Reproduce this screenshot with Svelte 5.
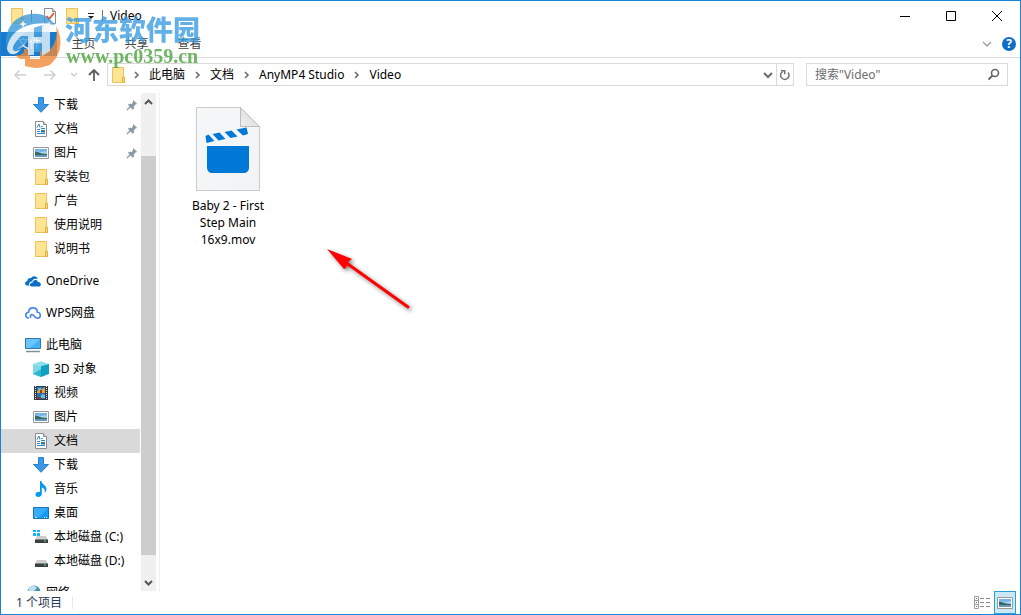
<script lang="ts">
  type Item = { icon: string; label: string; pinned?: boolean; root?: boolean; selected?: boolean };

  const groups: Item[][] = [
    [
      { icon: 'download', label: '下载', pinned: true },
      { icon: 'document', label: '文档', pinned: true },
      { icon: 'picture', label: '图片', pinned: true },
      { icon: 'folder', label: '安装包' },
      { icon: 'folder', label: '广告' },
      { icon: 'folder', label: '使用说明' },
      { icon: 'folder', label: '说明书' },
    ],
    [{ icon: 'onedrive', label: 'OneDrive', root: true }],
    [{ icon: 'wps', label: 'WPS网盘', root: true }],
    [
      { icon: 'computer', label: '此电脑', root: true },
      { icon: 'cube', label: '3D 对象' },
      { icon: 'film', label: '视频' },
      { icon: 'picture', label: '图片' },
      { icon: 'document', label: '文档', selected: true },
      { icon: 'download', label: '下载' },
      { icon: 'music', label: '音乐' },
      { icon: 'desktop', label: '桌面' },
      { icon: 'drivec', label: '本地磁盘 (C:)' },
      { icon: 'drive', label: '本地磁盘 (D:)' },
    ],
    [{ icon: 'network', label: '网络', root: true }],
  ];

  const tabs = ['主页', '共享', '查看'];
  const crumbs = ['此电脑', '文档', 'AnyMP4 Studio', 'Video'];
  let search = $state('');
</script>

{#snippet icon(name: string)}
  <svg class="icon" width="16" height="16" viewBox="0 0 16 16" aria-hidden="true">
    {#if name === 'download'}
      <path d="M5.5 .5h5v7h5L8 15.3.5 7.500h5z" fill="#3b96e6" stroke="#2a7fcb" />
    {:else if name === 'document'}
      <path d="M2.500.500h8l3 3v12h-11z" fill="#fff" stroke="#8c8c8c" />
      <path d="M10.500.500v3h3" fill="#ddd" stroke="#8c8c8c" />
      <path d="M4 6.500 6 3l1 3.500M8 5.500h1.500M8 7.500h4M4 8.500h3M4 10.500h3M4 12.500h8" fill="none" stroke="#2b8ac6" />
      <path d="M8 9h4v2.500H8z" fill="#3b78a8" />
    {:else if name === 'picture'}
      <path d="M.5 2.500h15v11H.5z" fill="#fff" stroke="#9a9a9a" />
      <path d="M2 4h12v8H2z" fill="#a8d2f0" />
      <path d="M2 4h12v2L8 7 2 5.500z" fill="#72b3ea" />
      <path d="M2 6.500c3 0 4 2 12 2.500v1.500H2z" fill="#326a62" />
      <path d="M2 10h12v2H2z" fill="#6a98bd" />
    {:else if name === 'folder'}
      <path d="M2.500.500h11v9l1 1v5h-12z" fill="#fee493" stroke="#eac35c" />
      <path d="M12.500 15.500V10l1-.8 1 .8v5.500z" fill="#fbd96e" stroke="#dfb340" />
    {:else if name === 'onedrive'}
      <path d="M1.500 12.500C-.6 11.500-.2 8.300 2.300 8 2.500 5.600 4.400 4.800 6 5.200 7.500 2.500 12 2.500 12.700 6.200 9.500 5.200 7.500 6.500 7 8.600 4.500 8.500 3.500 11 4.500 12.500z" fill="#0f6fc6" />
      <path d="M6.500 13.500c-2.400-.4-2.200-3.800.9-3.800C8 6.500 12 6 13 9c3-.2 4 3.700 1.200 4.500z" fill="#0f6fc6" />
    {:else if name === 'wps'}
      <path d="M4 13.200C-.3 13-.2 7.700 3.600 7.300 3.700 1.500 12 1.300 12.400 7.200c3.800.2 4 5.700.2 6-3 .2-3-2.900-5-3.500C5.700 9.200 4.600 11 6 12.800" fill="none" stroke="#4785ec" stroke-width="1.600" />
    {:else if name === 'computer'}
      <path d="M.5 1.500h15v10H.5z" fill="#43b0f8" stroke="#2d78a8" />
      <path d="M1 2h14L5 11H1z" fill="#6bc6ff" />
      <path d="M1 14.500h14" stroke="#78909f" stroke-width="1.500" />
    {:else if name === 'cube'}
      <path d="M8 .3 16 3 8 5 0 3z" fill="#8be0ec" />
      <path d="M0 3l8 2v11l-8-3z" fill="#7ed8e6" />
      <path d="M16 3 8 5v11l8-3z" fill="#10a0c0" />
      <path d="M0 13l8-5v8z" fill="#32b5cf" />
    {:else if name === 'film'}
      <path d="M1 1h14v14H1z" fill="#353b44" />
      <path d="M4 2h8v12H4z" fill="#356dae" />
      <path d="M4 7c2-4 4-1 8-5v6H4z" fill="#e0a53b" />
      <path d="M5 3h3v2H5zM9 9l3 1v3H7z" fill="#5ac2e3" />
      <path d="M7 5h2v3H7zM4 12h4v2H4z" fill="#843c38" />
      <path d="M2.500 1v14M13.500 1v14" stroke="#dbe4eb" stroke-width="1" stroke-dasharray="1 1" />
    {:else if name === 'music'}
      <path d="M7 0h1.500c.2 3.500 5 4 5 8 0 2-.9 3.300-2 4 .9-2.800-.2-4.700-2.700-5.500V13c0 3.500-6 4-6.300 1C2.300 11.500 4.800 10.300 7 11z" fill="#0898ee" />
    {:else if name === 'desktop'}
      <path d="M.5 2.500h15v11H.5z" fill="#149cf4" stroke="#1673b6" />
      <path d="M1 3h14L6 12H1z" fill="#36adff" />
      <path d="M2 12.500h2m7 0h1m1 0h1" stroke="#d0edff" />
    {:else if name === 'drivec' || name === 'drive'}
      <path d="M4 7h9l2 4H2z" fill="#cecece" />
      <path d="M2 10.500h13v3.500H2z" fill="#3c3f43" />
      <path d="M11 12h2" stroke="#53f16a" />
      {#if name === 'drivec'}
        <path d="M0 1h3v2H0zM4 1h3v2H4zM0 4h3v3H0zM4 4h3v3H4z" fill="#14b5f5" />
      {/if}
    {:else if name === 'network'}
      <circle cx="9" cy="7" r="6.500" fill="#408eb5" />
      <path d="M4 3c3-4 7-2 8 0L8 7 3 8z" fill="#bce0ef" />
      <path d="M0 10h9v5H0z" fill="#4382b4" />
    {/if}
  </svg>
{/snippet}

{#snippet chevron()}
  <svg class="chevron" width="8" height="8" viewBox="0 0 8 8" aria-hidden="true">
    <path d="M2 1l3 3-3 3" fill="none" stroke="#6c6c6c" stroke-width="1.600" />
  </svg>
{/snippet}

<div class="window">
  <header class="titlebar">
    <div class="quick">
      <button aria-label="Video">{@render icon('folder')}</button>
      <i></i>
      <button aria-label="属性">
        <svg width="16" height="16" viewBox="0 0 16 16">
          <path d="M2.500.500h8l3 3v12h-11z" fill="#fafafa" stroke="#8c8c8c" />
          <path d="M10.500.500v3h3" fill="#ddd" stroke="#8c8c8c" />
          <path d="M4.500 8l2.500 3 5-6" fill="none" stroke="#e0532d" stroke-width="1.800" />
        </svg>
      </button>
      <button aria-label="新建文件夹">{@render icon('folder')}</button>
      <button class="more" aria-label="自定义快速访问工具栏">
        <svg width="8" height="8" viewBox="0 0 8 8"><path d="M1 1.500h6" stroke="#222" /><path d="M1 4h6L4 7z" fill="#222" /></svg>
      </button>
      <i></i>
    </div>
    <h1>Video</h1>
    <div class="controls">
      <button aria-label="最小化"><svg width="12" height="12"><path d="M1 6.500h10" stroke="#000" /></svg></button>
      <button aria-label="最大化"><svg width="12" height="12"><path d="M1.500 1.500h9v9h-9z" fill="none" stroke="#000" /></svg></button>
      <button aria-label="关闭"><svg width="12" height="12"><path d="M1 1l10 10M11 1 1 11" stroke="#000" /></svg></button>
    </div>
  </header>

  <div class="ribbon">
    <button class="file-tab">文件</button>
    {#each tabs as tab}
      <button class="tab">{tab}</button>
    {/each}
    <div class="ribbon-end">
      <button aria-label="展开功能区">
        <svg width="10" height="8"><path d="M1 2l4 4 4-4" fill="none" stroke="#999" stroke-width="1.300" /></svg>
      </button>
      <button class="help" aria-label="帮助">?</button>
    </div>
  </div>

  <div class="navbar">
    <div class="history">
      <button aria-label="后退"><svg width="14" height="12"><path d="M13 6H2M6.500 1.500 2 6l4.500 4.500" fill="none" stroke="#d0d0d0" stroke-width="1.500" /></svg></button>
      <button aria-label="前进"><svg width="14" height="12"><path d="M1 6h11M7.500 1.500 12 6l-4.500 4.500" fill="none" stroke="#d0d0d0" stroke-width="1.500" /></svg></button>
      <button class="recent" aria-label="最近浏览的位置"><svg width="8" height="6"><path d="M1 1l3 3 3-3" fill="none" stroke="#cfcfcf" stroke-width="1.500" /></svg></button>
      <button class="up" aria-label="上移"><svg width="12" height="14"><path d="M6 13V2M1 7l5-5 5 5" fill="none" stroke="#5c5c5c" stroke-width="1.800" /></svg></button>
    </div>
    <nav class="address" aria-label="地址">
      {@render icon('folder')}
      {#each crumbs as crumb}
        {@render chevron()}
        <a href="#{crumb}">{crumb}</a>
      {/each}
      <button class="drop" aria-label="以前的位置"><svg width="10" height="8"><path d="M1 2l4 4 4-4" fill="none" stroke="#6c6c6c" stroke-width="2" /></svg></button>
      <button class="refresh" aria-label="刷新"><svg width="12" height="12"><path d="M9 3.500A4.200 4.200 0 1 1 3.500 2.700" fill="none" stroke="#707070" stroke-width="1.500" /><path d="M2 1.700h3.700v3.600" fill="none" stroke="#707070" stroke-width="1.500" /></svg></button>
    </nav>
    <label class="search">
      <input type="text" aria-label="搜索" placeholder={'搜索"Video"'} bind:value={search} />
      <svg width="14" height="14"><circle cx="8" cy="5" r="3.500" fill="none" stroke="#666" stroke-width="1.600" /><path d="M5.500 7.500 1.500 11.500" stroke="#666" stroke-width="2" /></svg>
    </label>
  </div>

  <div class="body">
    <aside class="tree">
      {#each groups as group}
        <ul>
          {#each group as item}
            <li class:root={item.root} class:selected={item.selected}>
              {@render icon(item.icon)}
              <span>{item.label}</span>
              {#if item.pinned}
                <svg class="pin" width="12" height="12" viewBox="0 0 12 12" aria-hidden="true">
                  <path d="M7 .8 11.200 5l-1.700.5-1.700 1.700.2 2.600-1.200 1L2 6l1-1.200 2.700.2L7 3z" fill="#8b99a4" />
                  <path d="M4.700 7.300 1 11" stroke="#8b99a4" stroke-width="1.300" />
                </svg>
              {/if}
            </li>
          {/each}
        </ul>
      {/each}
    </aside>
    <div class="scrollbar">
      <button aria-label="向上滚动"><svg width="9" height="8"><path d="M1 6l3.500-3.500L8 6" fill="none" stroke="#555" stroke-width="2" /></svg></button>
      <div class="track"><div class="thumb"></div></div>
      <button aria-label="向下滚动"><svg width="9" height="8"><path d="M1 2l3.500 3.500L8 2" fill="none" stroke="#555" stroke-width="2" /></svg></button>
    </div>
    <main class="files">
      <figure>
        <svg width="64" height="84" viewBox="0 0 64 84" aria-hidden="true">
          <defs>
            <linearGradient id="paper" x1="0" y1="0" x2="1" y2="1">
              <stop offset="0" stop-color="#f6f7f7" />
              <stop offset="1" stop-color="#f2f3f5" />
            </linearGradient>
            <linearGradient id="fold" x1="0" y1="1" x2="1" y2="0">
              <stop offset="0" stop-color="#f0f0f0" />
              <stop offset="1" stop-color="#d5d5d5" />
            </linearGradient>
          </defs>
          <path d="M.5.5h44l19 19v64H.5z" fill="url(#paper)" stroke="#c9cbcc" />
          <path d="M44.500.500v19h19z" fill="url(#fold)" stroke="#bdbdbd" />
          <path d="M11 39h42v21c0 4-2 6-6 6H17c-4 0-6-2-6-6z" fill="#0078d7" />
          <g fill="#0078d7">
            <path d="M9.500 29l3-1.500 6 6.500-8 2z" />
            <path d="M16.500 27l7-1.500 6 6.500-7 1.500z" />
            <path d="M28.500 25l7-1.500 6 6-7 1.500z" />
            <path d="M40.500 22.500l10-2L52 27l-5 1.500z" />
          </g>
        </svg>
        <figcaption>Baby 2 - First Step Main 16x9.mov</figcaption>
      </figure>
      <svg class="pointer" width="96" height="76" viewBox="0 0 96 76" aria-hidden="true">
        <g class="pointer-shape">
          <path d="M3 4 28 14 24 17 22 23 20 24z" />
          <path d="M21 17 84 62" stroke="#f00" stroke-width="3" stroke-linecap="round" />
        </g>
      </svg>
    </main>
  </div>

  <footer class="status">
    <span>1 个项目</span>
    <i></i>
    <div class="views">
      <button aria-label="详细信息">
        <svg width="18" height="14" viewBox="0 0 18 14">
          <path d="M1.500.5h4v12h-4zM1.500 4.500h4M1.500 8.500h4" fill="#fff" stroke="#9a9a9a" />
          <path d="M3 2.500h1" stroke="#3c8a64" /><path d="M3 6.500h1" stroke="#3978e8" /><path d="M3 10.500h1" stroke="#d33" />
          <path d="M7 2.500h4m2 0h4M7 6.500h4m2 0h4M7 10.500h4m2 0h4" stroke="#888" />
        </svg>
      </button>
      <button class="active" aria-label="大图标">{@render icon('picture')}</button>
    </div>
  </footer>

  <div class="watermark">
    <svg width="60" height="60" viewBox="0 0 60 60" aria-hidden="true">
      <path d="M2 40C-2 21 9 6 27 5c11-1 18 4 23 11-14-2-27 4-34 15-3 5-5 10-8 13-3 2-5 0-6-4z" fill="#3d9bd9" />
      <path d="M6 39C6 24 22 13 45 15v28H26V30l-9 7c-4 6-8 8-11 2z" fill="#4ba3dd" />
      <path d="M51 17c7 12 6 27-4 37-2 2-4 3-6 3V44c9-6 12-16 10-27z" fill="#f08a3a" />
      <path d="M10 46c3 1 6 0 9-3v-3h6v10h10v-8h6v15c-7 3-14 2-21 0v-7h-5z" fill="#f08a3a" />
      <path d="M2 40C4 23 20 11 50 15 29 15 14 25 8 38c-1 4 2 6 8 2-5 7-12 7-14 0z" fill="#fff" />
      <path d="M15 27 29 15v13h8V17l8-4v29l-8 5V34h-8v12h-6V27z" fill="#fff" opacity=".9" />
      <path d="M18 11l1 3 3 1-3 1-1 3-1-3-3-1 3-1z" fill="#fff" />
    </svg>
    <div class="watermark-text">
      <strong>河东软件园</strong>
      <em>www.pc0359.cn</em>
    </div>
  </div>
</div>

<style>
  :global(body) {
    background: #fff;
    color: #000;
    font: 12px/16px "Noto Sans", "Noto Sans CJK SC", sans-serif;
  }

  button {
    display: flex;
    align-items: center;
    justify-content: center;
    padding: 0;
    border: 0;
    background: transparent;
    color: inherit;
    font: inherit;
  }

  svg {
    display: block;
    flex: none;
  }

  .window {
    position: relative;
    display: flex;
    flex-direction: column;
    box-sizing: border-box;
    height: 100vh;
    border: 1px solid #1883d7;
  }

  .titlebar {
    display: flex;
    align-items: center;
    height: 30px;
  }

  .quick {
    display: flex;
    align-items: center;
    gap: 6px;
    padding-left: 8px;
  }

  .quick i {
    width: 1px;
    height: 12px;
    background: #777;
  }

  .quick i:first-of-type {
    margin-right: 4px;
  }

  .quick .more {
    width: 10px;
  }

  h1 {
    margin: 0 0 0 7px;
    font-size: 12px;
    font-weight: normal;
  }

  .controls {
    display: flex;
    margin-left: auto;
  }

  .controls button {
    width: 46px;
    height: 30px;
  }

  .ribbon {
    display: flex;
    align-items: center;
    height: 26px;
    border-bottom: 1px solid #dadbdc;
  }

  .ribbon button {
    height: 24px;
    color: #444;
  }

  .ribbon .file-tab {
    width: 56px;
    background: #1979ca;
    color: #fff;
  }

  .tab {
    width: 53px;
  }

  .ribbon-end {
    display: flex;
    align-items: center;
    gap: 10px;
    margin-left: auto;
    padding-right: 4px;
  }

  .ribbon-end .help {
    width: 14px;
    height: 14px;
    border-radius: 50%;
    background: #0f6fc6;
    color: #fff;
    font-weight: bold;
  }

  .navbar {
    display: flex;
    align-items: center;
    padding: 5px 12px 7px 0;
  }

  .history {
    display: flex;
    align-items: center;
    width: 106px;
    box-sizing: border-box;
    padding-left: 12px;
    gap: 16px;
  }

  .history .recent {
    margin-left: -3px;
  }

  .history .up {
    margin-left: -6px;
  }

  .address {
    display: flex;
    align-items: center;
    flex: 1;
    box-sizing: border-box;
    height: 23px;
    padding-left: 2px;
    border: 1px solid #d9d9d9;
  }

  .address .chevron {
    margin: 0 8px 0 7px;
  }

  .address a {
    padding-right: 2px;
    color: #000;
    text-decoration: none;
    white-space: nowrap;
  }

  .address .drop {
    width: 16px;
    height: 21px;
    margin-left: auto;
  }

  .address .refresh {
    width: 17px;
    height: 21px;
    border-left: 1px solid #d9d9d9;
  }

  .search {
    display: flex;
    align-items: center;
    box-sizing: border-box;
    width: 202px;
    height: 23px;
    margin-left: 12px;
    padding: 0 6px 0 8px;
    border: 1px solid #d9d9d9;
  }

  .search input {
    flex: 1;
    min-width: 0;
    padding: 0;
    border: 0;
    outline: 0;
    font: inherit;
  }

  .search input::placeholder {
    color: #6d6d6d;
    opacity: 1;
  }

  .body {
    display: flex;
    flex: 1;
    min-height: 0;
  }

  .tree {
    width: 139px;
    overflow: hidden;
  }

  .tree ul {
    margin: 0 0 8px;
    padding: 0;
    list-style: none;
  }

  .tree li {
    display: flex;
    align-items: center;
    gap: 5px;
    height: 24px;
    padding: 0 2px 0 32px;
    white-space: nowrap;
  }

  .tree li.root {
    padding-left: 24px;
  }

  .tree li.selected {
    background: #d9d9d9;
  }

  .pin {
    margin-left: auto;
  }

  .scrollbar {
    display: flex;
    flex-direction: column;
    width: 15px;
    margin: 0 3px 0 1px;
    background: #f0f0f0;
  }

  .scrollbar button {
    height: 17px;
  }

  .track {
    display: flex;
    flex: 1;
    flex-direction: column;
    padding: 46px 0 19px;
  }

  .thumb {
    flex: 1;
    background: #cdcdcd;
  }

  .files {
    position: relative;
    flex: 1;
    padding: 14px 25px;
    border-left: 1px solid #f0f0f0;
  }

  figure {
    display: flex;
    flex-direction: column;
    align-items: center;
    gap: 6px;
    width: 86px;
    margin: 0;
  }

  figcaption {
    line-height: 17px;
    text-align: center;
  }

  .pointer {
    position: absolute;
    left: 164px;
    top: 152px;
  }

  .pointer-shape {
    fill: #f00;
    filter: drop-shadow(2px 2px 2px rgba(0, 0, 0, 0.5));
  }

  .status {
    display: flex;
    align-items: center;
    height: 23px;
    padding: 0 4px 0 15px;
    color: #1e395b;
  }

  .status i {
    width: 1px;
    height: 12px;
    margin-left: 10px;
    background: #e6e6e6;
  }

  .views {
    display: flex;
    gap: 1px;
    margin-left: auto;
  }

  .views button {
    box-sizing: border-box;
    width: 22px;
    height: 23px;
  }

  .views .active {
    border: 1px solid #26a0da;
    background: #cbe8f6;
  }

  .watermark {
    position: absolute;
    left: 4px;
    top: 8px;
    display: flex;
    opacity: 0.8;
    pointer-events: none;
  }

  .watermark-text {
    display: flex;
    flex-direction: column;
    padding-top: 4px;
  }

  .watermark strong {
    color: #3d9de2;
    font: 900 27px/32px "Noto Sans CJK SC", sans-serif;
  }

  .watermark em {
    padding-left: 1px;
    color: #4aa53a;
    font: bold 20px/22px "Liberation Serif", serif;
  }
</style>
